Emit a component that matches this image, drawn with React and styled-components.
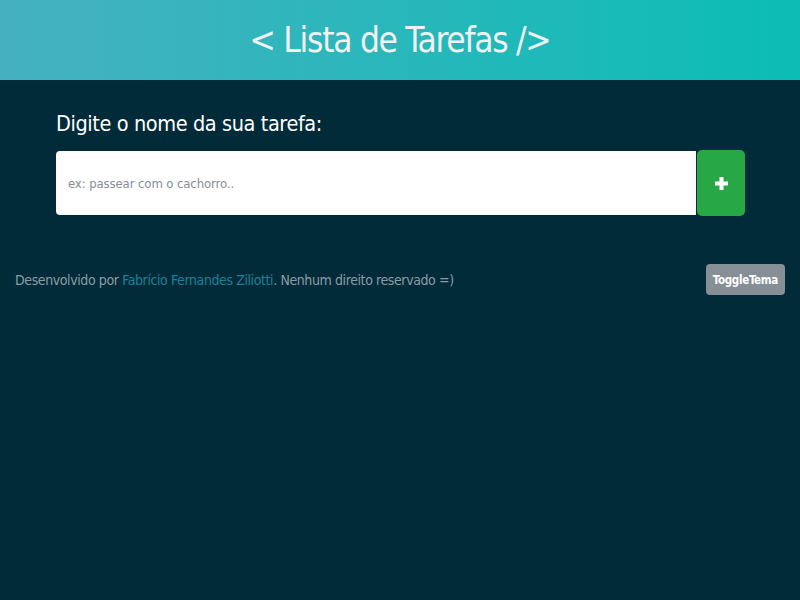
import React, { useState } from 'react';
import styled, { createGlobalStyle } from 'styled-components';

const GlobalStyle = createGlobalStyle`
  html, body {
    margin: 0;
    padding: 0;
    background: #022b3a;
    font-family: "DejaVu Sans Condensed", "Liberation Sans", sans-serif;
  }
  * { box-sizing: border-box; }
`;

const App = () => {
  const [task, setTask] = useState('');

  return (
    <Page>
      <GlobalStyle />
      <Header>
        <Title>&lt; Lista de Tarefas /&gt;</Title>
      </Header>
      <Main>
        <Label htmlFor="task">Digite o nome da sua tarefa:</Label>
        <InputRow>
          <TaskInput
            id="task"
            value={task}
            onChange={(e) => setTask(e.target.value)}
            placeholder="ex: passear com o cachorro.."
          />
          <AddButton aria-label="Adicionar">
            <svg width="13" height="13" viewBox="0 0 13 13">
              <path d="M4.5 0h4v4.5H13v4H8.5V13h-4V8.5H0v-4h4.5z" fill="#fff" />
            </svg>
          </AddButton>
        </InputRow>
      </Main>
      <Footer>
        <Credits>
          Desenvolvido por <Author href="#">Fabrício Fernandes Ziliotti</Author>. Nenhum direito reservado =)
        </Credits>
        <ToggleButton>ToggleTema</ToggleButton>
      </Footer>
    </Page>
  );
};

export default App;

const Page = styled.div`
  min-height: 600px;
  background: #022b3a;
`;

const Header = styled.header`
  height: 80px;
  display: flex;
  align-items: center;
  justify-content: center;
  background: linear-gradient(90deg, #46b1c0 0%, #0bbdb5 100%);
`;

const Title = styled.h1`
  margin: 0;
  font-size: 35px;
  letter-spacing: -1.3px;
  font-weight: 400;
  color: #f1f1f1;
`;

const Main = styled.main`
  padding: 29px 55px 0 56px;
  display: flex;
  flex-direction: column;
`;

const Label = styled.label`
  font-size: 21.5px;
  letter-spacing: -0.4px;
  color: #ffffff;
  line-height: 30px;
  margin-bottom: 11px;
`;

const InputRow = styled.div`
  display: flex;
  align-items: center;
`;

const TaskInput = styled.input`
  flex: 1;
  height: 64px;
  border: none;
  border-radius: 4px 0 0 4px;
  padding: 0 12px;
  font-family: inherit;
  font-size: 13px;
  letter-spacing: -0.1px;
  color: #495057;
  outline: none;
  &::placeholder {
    color: #868e96;
  }
`;

const AddButton = styled.button`
  width: 48px;
  height: 66px;
  margin-left: 1px;
  border: none;
  border-radius: 5px;
  background: #28a745;
  display: flex;
  align-items: center;
  justify-content: center;
  cursor: pointer;
`;

const Footer = styled.footer`
  margin-top: 48px;
  padding: 0 15px;
  display: flex;
  align-items: center;
  justify-content: space-between;
`;

const Credits = styled.p`
  margin: 0;
  padding-top: 1px;
  font-size: 14px;
  letter-spacing: -0.4px;
  color: #8a9ca5;
`;

const Author = styled.a`
  color: #1f8099;
  text-decoration: none;
`;

const ToggleButton = styled.button`
  height: 31px;
  padding: 0 7px;
  border: none;
  border-radius: 4px;
  background: #868e96;
  color: #fff;
  font-family: inherit;
  font-size: 11.5px;
  letter-spacing: -0.3px;
  font-weight: 700;
  cursor: pointer;
`;
